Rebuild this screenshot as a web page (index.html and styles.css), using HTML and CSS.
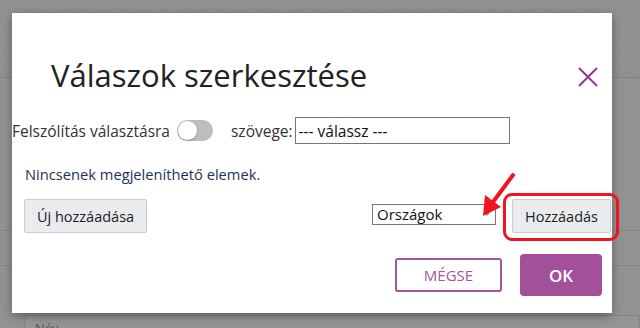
FILE: index.html
```html
<!DOCTYPE html>
<html lang="hu">
<head>
<meta charset="utf-8">
<title>Válaszok szerkesztése</title>
<link rel="stylesheet" href="styles.css">
</head>
<body>
<div class="bg-page">
  <div class="bg-top"></div>
  <div class="bg-mid"></div>
  <div class="bg-row"></div>
  <div class="bg-row2"></div>
  <div class="bg-card"><span class="bg-card-text">Név</span></div>
</div>

<div class="modal">
  <div class="modal-header">
    <h1 class="modal-title">Válaszok szerkesztése</h1>
    <button class="close-btn" aria-label="Bezárás">
      <svg width="20" height="20" viewBox="0 0 20 20"><path d="M1 1 L19 19 M19 1 L1 19" stroke="#8e3a8c" stroke-width="2" fill="none"/></svg>
    </button>
  </div>
  <div class="prompt-row">
    <span class="label">Felszólítás választásra</span>
    <span class="toggle"><span class="knob"></span></span>
    <span class="label label-text">szövege:</span>
    <input class="text-input" type="text" value="--- válassz ---">
  </div>
  <p class="empty">Nincsenek megjeleníthető elemek.</p>
  <div class="action-row">
    <button class="btn-light btn-new">Új hozzáadása</button>
    <div class="action-right">
      <div class="select">Országok<span class="caret"></span></div>
      <button class="btn-light btn-add">Hozzáadás</button>
    </div>
  </div>
  <div class="modal-footer">
    <button class="btn-outline">MÉGSE</button>
    <button class="btn-primary">OK</button>
  </div>
</div>

<div class="highlight"></div>
<svg class="arrow" width="40" height="50" viewBox="0 0 40 50">
  <path d="M33 3 L13 30" stroke="#f0141e" stroke-width="4" stroke-linecap="round" fill="none"/>
  <path d="M3 44 L5 23 L21 35 Z" fill="#f0141e"/>
</svg>
</body>
</html>
```
FILE: styles.css
```css
* { box-sizing: border-box; }
html, body { margin: 0; padding: 0; }
body {
  width: 640px;
  height: 328px;
  overflow: hidden;
  background: #929292;
  font-family: "Open Sans", "Noto Sans", sans-serif;
  position: relative;
}

.bg-page { display: flex; flex-direction: column; }
.bg-top {
  height: 78px;
  border-bottom: 1px solid #838383;
  background: repeating-linear-gradient(135deg, #8f8f8f 0 2px, #929292 2px 4px);
}
.bg-mid { height: 152px; }
.bg-row { height: 35px; border-top: 1px solid #858585; }
.bg-row2 { height: 50px; border-top: 1px solid #858585; }
.bg-card {
  margin-left: 24px;
  height: 30px;
  border: 1px solid #858585;
  border-radius: 4px 0 0 0;
  background: #959595;
  padding: 4px 10px;
  font-size: 13px;
  line-height: 16px;
  color: #555;
}

.modal {
  position: absolute;
  left: 12px;
  top: 13px;
  width: 600px;
  height: 300px;
  background: #fff;
  box-shadow: 0 3px 9px rgba(0,0,0,0.35);
  display: flex;
  flex-direction: column;
}

.modal-header {
  display: flex;
  align-items: center;
  justify-content: space-between;
  padding: 44px 14px 0 39px;
  height: 84px;
}
.modal-title {
  margin: 0;
  font-weight: 400;
  font-size: 31px;
  line-height: 36px;
  color: #222;
  position: relative;
  top: -2px;
}
.close-btn {
  border: 0;
  background: none;
  padding: 0;
  width: 20px;
  height: 20px;
  display: flex;
}

.prompt-row {
  display: flex;
  align-items: center;
  margin-top: 20px;
  height: 27px;
  font-size: 15.5px;
  color: #333;
}
.label { white-space: nowrap; }
.toggle {
  width: 36px;
  height: 21px;
  margin-left: 7px;
  border-radius: 11px;
  background: #bdbdbd;
  position: relative;
  display: inline-block;
}
.knob {
  position: absolute;
  left: 1px;
  top: 1px;
  width: 19px;
  height: 19px;
  border-radius: 50%;
  background: #fff;
  box-shadow: 0 1px 2px rgba(0,0,0,0.25);
}
.label-text { margin-left: 18px; }
.text-input {
  margin-left: 2px;
  width: 215px;
  height: 27px;
  border: 1px solid #767676;
  padding: 0 3px;
  font-family: "Open Sans", sans-serif;
  font-size: 15.5px;
  color: #111;
}

.empty {
  margin: 20px 0 0 13px;
  font-size: 14.7px;
  line-height: 20px;
  color: #1f3358;
}

.action-row {
  display: flex;
  justify-content: space-between;
  align-items: center;
  margin-top: 15px;
  padding-left: 12px;
  padding-right: 1px;
}
.btn-light {
  height: 34px;
  border: 1px solid #c9cdd1;
  border-radius: 2px;
  background: #e9ebee;
  font-family: "Open Sans", sans-serif;
  font-size: 14.5px;
  color: #222;
  padding: 0 8px;
}
.btn-new { width: 123px; }
.action-right { display: flex; align-items: center; gap: 16px; }
.select {
  width: 124px;
  height: 21px;
  border: 1px solid #767676;
  font-size: 15px;
  line-height: 19px;
  padding-left: 4px;
  color: #111;
  position: relative;
  margin-top: -4px;
}
.caret {
  position: absolute;
  right: 5px;
  top: 8px;
  border-left: 3px solid transparent;
  border-right: 3px solid transparent;
  border-top: 3px solid #999;
}
.btn-add { width: 99px; }

.modal-footer {
  display: flex;
  justify-content: flex-end;
  align-items: center;
  gap: 18px;
  margin-top: 21px;
  padding-right: 10px;
}
.btn-outline {
  width: 107px;
  height: 34px;
  border: 2px solid #a4559c;
  border-radius: 3px;
  background: #fff;
  color: #a4559c;
  font-family: "Open Sans", sans-serif;
  font-size: 15px;
}
.btn-primary {
  width: 82px;
  height: 42px;
  border: 0;
  border-radius: 4px;
  background: #a2509a;
  color: #fff;
  font-family: "Open Sans", sans-serif;
  font-size: 17px;
  font-weight: 600;
}

.highlight {
  position: absolute;
  left: 503px;
  top: 193px;
  width: 116px;
  height: 48px;
  border: 3px solid #f0141e;
  border-radius: 9px;
}
.arrow {
  position: absolute;
  left: 480px;
  top: 172px;
}
```
